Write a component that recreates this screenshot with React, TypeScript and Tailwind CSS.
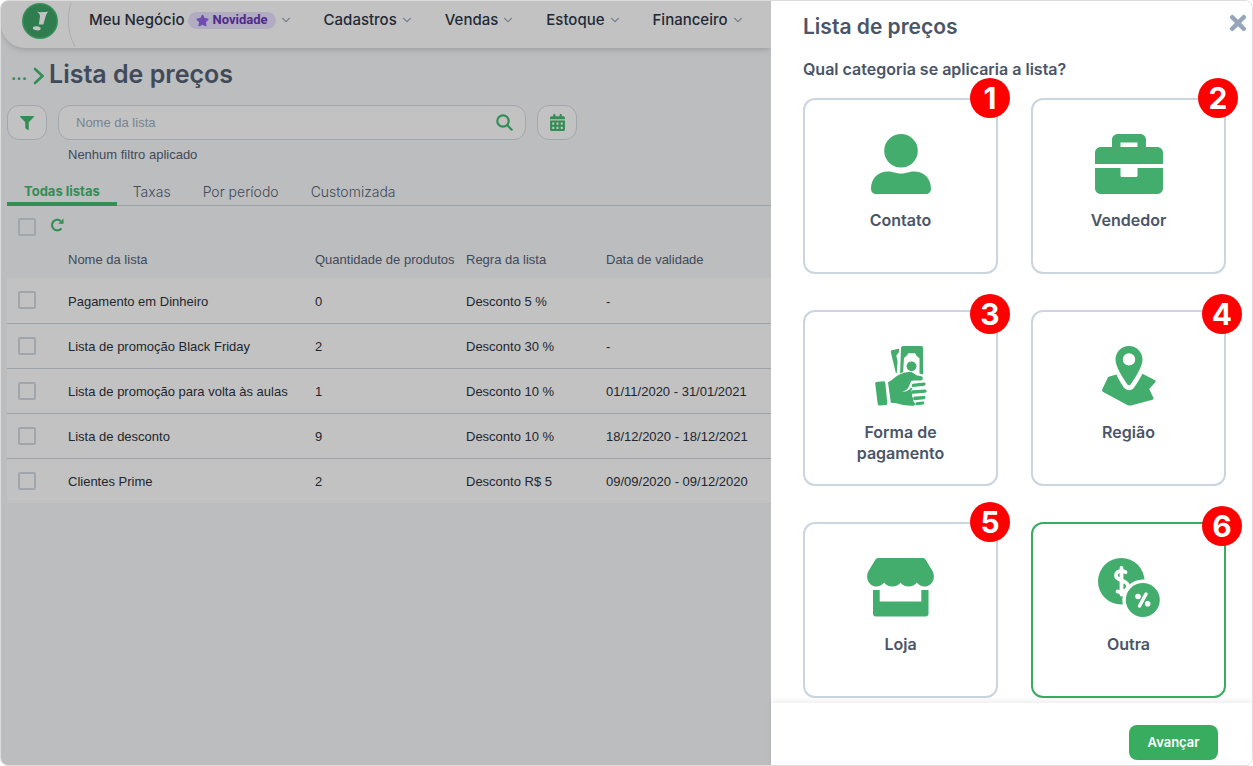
import React, { useState } from 'react';
import { FaFilter, FaCalendarAlt, FaStar, FaTimes } from 'react-icons/fa';
import { ChevronDown } from 'lucide-react';

interface PriceList {
  id: number;
  name: string;
  quantity: number;
  rule: string;
  validity: string;
}

interface Category {
  id: string;
  label: string;
  icon: React.ReactNode;
  badgeClass: string;
}

const priceLists: PriceList[] = [
  { id: 1, name: 'Pagamento em Dinheiro', quantity: 0, rule: 'Desconto 5 %', validity: '-' },
  { id: 2, name: 'Lista de promoção Black Friday', quantity: 2, rule: 'Desconto 30 %', validity: '-' },
  { id: 3, name: 'Lista de promoção para volta às aulas', quantity: 1, rule: 'Desconto 10 %', validity: '01/11/2020 - 31/01/2021' },
  { id: 4, name: 'Lista de desconto', quantity: 9, rule: 'Desconto 10 %', validity: '18/12/2020 - 18/12/2021' },
  { id: 5, name: 'Clientes Prime', quantity: 2, rule: 'Desconto R$ 5', validity: '09/09/2020 - 09/12/2020' },
];

const menuItems = ['Meu Negócio', 'Cadastros', 'Vendas', 'Estoque', 'Financeiro'];
const tabs = ['Todas listas', 'Taxas', 'Por período', 'Customizada'];

const ContactIcon = () => (
  <svg width="60" height="60" viewBox="0 0 60 60" fill="currentColor">
    <circle cx="30" cy="16.8" r="16.8" />
    <path d="M0 54.500C0 44.500 7 37.500 17 37.500c5 0 7.500 2 13 2s8-2 13-2c10 0 17 7 17 17 0 3.500-2 5.500-5.500 5.500h-49C2 60 0 58 0 54.500z" />
  </svg>
);

const BriefcaseIcon = () => (
  <svg width="68" height="60" viewBox="0 0 68 60" fill="currentColor">
    <path fillRule="evenodd" d="M17 13V6c0-3.500 2.500-6 6-6h22c3.500 0 6 2.500 6 6v7h11c3.500 0 6 2.500 6 6v11H0V19c0-3.500 2.500-6 6-6h11zm8.500 0h17V8.500h-17V13z" />
    <path d="M0 34h25.500v7.500c0 1 .7 1.500 1.500 1.500h14c.8 0 1.500-.5 1.500-1.500V34H68v20c0 3.500-2.500 6-6 6H6c-3.500 0-6-2.500-6-6V34z" />
  </svg>
);

const PaymentIcon = () => (
  <svg width="52" height="60" viewBox="0 0 52 60" fill="currentColor">
    <path d="M1.500 36l7-.8c1-.1 1.700.5 1.800 1.500l2 20.500c.1 1-.4 1.600-1.400 1.700l-6.500.6c-1 .1-1.600-.4-1.700-1.400L.2 37.600c-.1-1 .3-1.500 1.300-1.600z" />
    <path d="M17 4.300l6.300-1.500c.6-.1.900.2.800.8l-.2 2.700-2.600 3.200 1.300 6-.8 11.200-.9.600L15.800 6c-.2-.9.200-1.500 1.200-1.700z" />
    <path d="M28 0h18c1.300 0 2 .8 2 2v26.500l-3.500-1V12.200l-3-2.400-1.300-2.600h-7l-1.500 2.600-2.700 2.200-.9 14-3 1.500L26 2c.1-1.300.8-2 2-2z" />
    <circle cx="36.500" cy="20.300" r="4.900" />
    <path d="M13 36.200c4.500-2.200 7.500-5.700 11-7.500 4-2 8-3.200 12.500-2.700l5.500 3.500 4.500.7c2 .8 1.700 3.800-.5 4.200-4 .5-7-.4-10 .8-1.700 4-2.200 6.500-4 8-1.300 1.200-3 1.900-5 2.600 4.200.2 7.500-1.800 9-4.300l1.600 1c-1.700 1.500-1.800 3.500-.2 5-.8 2-.4 3.500 1 4.700-.6 2.300.2 4.300 2.400 5.800l-2 1.700c-6.500.2-13-.8-18.500-2.600-1.700-.5-3.500.2-4.500-.5z" />
    <path d="M38 37.700l11-1.200c2.200 0 2.300 3 0 3.300L38 41c-1.700 0-1.700-3.100 0-3.300zM37.500 44.300l12.500-.8c2.200 0 2.200 3 0 3.300l-12.500 1c-1.700 0-1.700-3.300 0-3.500zM39.500 50.600l9.500-.6c2 0 2 2.700 0 3.200l-9.500 1c-1.700 0-1.700-3.400 0-3.600zM41.500 56.300l6.500-.8c1.800 0 1.700 2.500 0 2.900l-6 .9c-1.700 0-2-2.700-.5-3z" />
  </svg>
);

const RegionIcon = () => (
  <svg width="54" height="60" viewBox="0 0 54 60" fill="currentColor">
    <path fillRule="evenodd" d="M27 0c7.500 0 13.500 6 13.500 13.500 0 7-6.500 17-11.500 24.500-1.300 1.700-2.700 1.700-4 0C20 30.500 13.500 20.500 13.500 13.500 13.500 6 19.500 0 27 0zm0 7.200a6.200 6.200 0 1 0 0 12.400 6.200 6.200 0 0 0 0-12.400z" />
    <path d="M7.500 30.500l7-2c.8 2.500 4 8 7.500 13.300 2.800 3.300 7.500 3.300 10 0 3.800-5.500 6.700-10.800 8.500-14L52.500 34c1.200.6 1.500 1.500.6 2.500L47.200 43l4.300 9c.3 1-.2 1.500-1 1.800L29 59.400c-1.500.4-2.600.2-3.700-.4L1.200 46C.2 45.500-.2 44.500.2 43.500l5.300-11.300c.4-.9 1-1.500 2-1.700z" />
  </svg>
);

const StoreIcon = () => (
  <svg width="67" height="60" viewBox="0 0 67 60" fill="currentColor">
    <path d="M11.500 0h44c1.400 0 2.400.5 3.200 1.800L65.500 13C69 19 65.500 28.500 58 28.500c-4 0-6.500-2-8.300-4-3 5.300-13 5.300-16.200 0-3.200 5.300-13.200 5.300-16.200 0-1.800 2-4.300 4-8.300 4C1.500 28.500-2 19 1.500 13L8.300 1.800C9.100.5 10.100 0 11.500 0z" />
    <path d="M6 32h6.700v11.500h41.600V32H61.500v23.500c0 2-1 3-3 3H9c-2 0-3-1-3-3V32z" />
  </svg>
);

const OtherIcon = () => (
  <svg width="62" height="60" viewBox="0 0 62 60" fill="currentColor">
    <circle cx="23.300" cy="23.300" r="23.300" />
    <path d="M27.500 14.200c-3.500-2.200-9.500-1.500-9.500 3.300 0 6 12 4 12 10.500 0 5.500-6.500 7-10.500 5.500M23.500 10v26.500" fill="none" stroke="#fff" strokeWidth="3.800" strokeLinecap="round" />
    <circle cx="44.800" cy="42" r="20.500" fill="#fff" />
    <circle cx="44.800" cy="42" r="17" />
    <path d="M48 36l-6.500 12" stroke="#fff" strokeWidth="3.500" strokeLinecap="round" />
    <circle cx="40" cy="38.500" r="2.800" fill="#fff" />
    <circle cx="49.700" cy="45.700" r="2.800" fill="#fff" />
  </svg>
);

const categories: Category[] = [
  { id: 'contato', label: 'Contato', icon: <ContactIcon />, badgeClass: '-top-5 -right-3' },
  { id: 'vendedor', label: 'Vendedor', icon: <BriefcaseIcon />, badgeClass: '-top-5 -right-3' },
  { id: 'pagamento', label: 'Forma de pagamento', icon: <PaymentIcon />, badgeClass: '-top-4 -right-3' },
  { id: 'regiao', label: 'Região', icon: <RegionIcon />, badgeClass: '-top-4 -right-4' },
  { id: 'loja', label: 'Loja', icon: <StoreIcon />, badgeClass: '-top-5 -right-3' },
  { id: 'outra', label: 'Outra', icon: <OtherIcon />, badgeClass: '-top-4 -right-4' },
];

const Logo = () => (
  <svg width="36" height="36" viewBox="0 0 36 36" className="shrink-0">
    <circle cx="18" cy="18" r="18" fill="#4cbd76" />
    <circle cx="18" cy="18" r="16.500" fill="#3fa468" />
    <path d="M15 8.500l3 .8 8.300-.6c-1.600 1.200-2.200 3-2.800 5.300L21.300 21.500h-4.500l1.200-8c.1-1.900-.9-3.200-3-5z" fill="#fff" />
    <ellipse cx="14.800" cy="25.300" rx="4" ry="2" fill="#fff" transform="rotate(8 14.800 25.300)" />
  </svg>
);

const Checkbox: React.FC<{ label: string }> = ({ label }) => (
  <input
    type="checkbox"
    aria-label={label}
    className="block size-[18px] appearance-none rounded-xs border-2 border-[#d3dae5] checked:bg-[#44ba70]"
  />
);

const Header = () => (
  <header className="flex h-[47px] shrink-0 items-start rounded-bl-[24px] bg-white pl-[21px] shadow-md">
    <div className="flex w-[67px] items-start pt-[2px]">
      <Logo />
      <svg width="12" height="45" viewBox="0 0 12 45" fill="none" className="ml-2 shrink-0">
        <path d="M5 0C1 14 1 28 9 44" stroke="#dfe3ea" strokeWidth="1" />
      </svg>
    </div>
    <nav className="flex gap-[31px] pt-[7px] whitespace-nowrap">
      {menuItems.map((item, index) => (
        <button key={item} className="flex items-center gap-[3px] text-[15px] leading-6 font-medium text-[#2d3748]">
          {item}
          {index === 0 && (
            <span className="flex h-[17px] items-center gap-1 rounded-full bg-[#e9e2ff] px-2 font-['Roboto',sans-serif] text-[13px] font-bold text-[#6b36b8]">
              <FaStar size={13} className="text-[#9466ea]" /> Novidade
            </span>
          )}
          <ChevronDown size={14} strokeWidth={2} className="text-[#a0aec0]" />
        </button>
      ))}
    </nav>
  </header>
);

const PriceListPage = () => {
  const [activeTab, setActiveTab] = useState('Todas listas');

  return (
    <main className="relative flex min-w-0 flex-1 flex-col overflow-hidden bg-[#f7f9fb]">
      <Header />

      <div className="flex flex-col pl-1.5">
        <div className="mt-2 flex items-center gap-1 pl-1 text-[#44ba70]">
          <a href="#inicio" className="w-[18px] text-base leading-9 font-bold">...</a>
          <svg width="12" height="18" viewBox="0 0 12 18" fill="none" className="mt-1">
            <path d="M2 2l7.500 7L2 16" stroke="currentColor" strokeWidth="2.600" strokeLinecap="round" />
          </svg>
          <h1 className="text-[25px] leading-9 font-semibold whitespace-nowrap text-[#566276]">Lista de preços</h1>
        </div>

        <div className="mt-[13px] flex gap-[11px]">
          <button aria-label="Filtrar" className="flex h-[35px] w-10 items-center justify-center rounded-xl border border-[#d3dae5] bg-white text-[#44ba70]">
            <FaFilter size={14} />
          </button>
          <div className="flex h-[35px] w-[468px] items-center rounded-xl border border-[#d3dae5] bg-white pr-3 pl-[17px]">
            <input
              type="text"
              aria-label="Nome da lista"
              placeholder="Nome da lista"
              className="min-w-0 flex-1 bg-transparent font-['Liberation_Sans',Arial,sans-serif] text-[13px] outline-none placeholder:text-[#a0aec0]"
            />
            <button aria-label="Buscar" className="text-[#44ba70]">
              <svg width="17" height="17" viewBox="0 0 17 17" fill="none" stroke="currentColor" strokeWidth="2.200" strokeLinecap="round">
                <circle cx="7" cy="7" r="5.700" />
                <path d="M11.300 11.300L15.700 15.700" />
              </svg>
            </button>
          </div>
          <button aria-label="Calendário" className="flex h-[35px] w-10 items-center justify-center rounded-xl border border-[#d3dae5] bg-white text-[#44ba70]">
            <FaCalendarAlt size={17} />
          </button>
        </div>
        <p className="mt-1.5 pl-[61px] font-['Liberation_Sans',Arial,sans-serif] text-[13px] leading-[18px] text-[#566276]">Nenhum filtro aplicado</p>

        <div role="tablist" className="mt-[11px] flex h-[31px] border-b border-[#cbd5e0] text-sm">
          {tabs.map((tab) => (
            <button
              key={tab}
              role="tab"
              aria-selected={tab === activeTab}
              onClick={() => setActiveTab(tab)}
              className={
                tab === activeTab
                  ? 'h-[31px] border-b-4 border-[#44ba70] px-[17px] pt-1.5 text-[13px] font-bold text-[#44ba70]'
                  : 'h-[31px] px-4 pt-0.5 font-light text-[#566276]'
              }
            >
              {tab}
            </button>
          ))}
        </div>

        <div className="mt-3 flex items-start gap-[14px] pl-[11px]">
          <Checkbox label="Selecionar todas" />
          <button aria-label="Atualizar" className="text-[#44ba70]">
            <svg width="14" height="14" viewBox="0 0 14 14" fill="none">
              <path d="M11.500 10.300A5.300 5.300 0 1 1 10.700 3" stroke="currentColor" strokeWidth="2.100" />
              <path d="M13.500.5v5.300H8.200z" fill="currentColor" />
            </svg>
          </button>
        </div>

        <table className="mt-3 w-full table-fixed text-left font-['Liberation_Sans',Arial,sans-serif] text-[13px] text-[#2d3340]">
          <thead>
            <tr className="h-[30px] text-[#566276]">
              <th className="w-[61px]"></th>
              <th className="w-[247px] pb-1.5 font-normal">Nome da lista</th>
              <th className="w-[151px] pb-1.5 font-normal whitespace-nowrap">Quantidade de produtos</th>
              <th className="w-[140px] pb-1.5 font-normal">Regra da lista</th>
              <th className="pb-1.5 font-normal">Data de validade</th>
            </tr>
          </thead>
          <tbody>
            {priceLists.map((list) => (
              <tr key={list.id} className="h-[45px] border-b border-[#cbd5e0] bg-white last:border-b-0">
                <td className="pl-[11px]"><Checkbox label={list.name} /></td>
                <td className="pt-0.5">{list.name}</td>
                <td className="pt-0.5">{list.quantity}</td>
                <td className="pt-0.5">{list.rule}</td>
                <td className="pt-0.5 whitespace-nowrap">{list.validity}</td>
              </tr>
            ))}
          </tbody>
        </table>
      </div>

      {/* Sombra sobre a página enquanto o painel está aberto */}
      <div className="pointer-events-none absolute inset-0 bg-black/24" />
    </main>
  );
};

const CategoryPanel = () => {
  const [selected, setSelected] = useState('outra');

  return (
    <aside className="flex w-[481px] shrink-0 flex-col bg-white">
      <div className="min-h-0 flex-1 overflow-hidden pr-[26px] pl-8">
        <div className="flex items-start justify-between pt-2.5">
          <h2 className="text-[21px] leading-8 font-semibold text-[#4a5568]">Lista de preços</h2>
          <button aria-label="Fechar" className="-mr-6 text-[#97a5ba]">
            <FaTimes size={24} />
          </button>
        </div>
        <p className="mt-3.5 text-base leading-6 font-semibold text-[#4a5568]">Qual categoria se aplicaria a lista?</p>

        <div className="mt-[17px] grid grid-cols-2 gap-x-[33px] gap-y-9">
          {categories.map((category, index) => (
            <div key={category.id} className="relative">
              <button
                aria-pressed={selected === category.id}
                onClick={() => setSelected(category.id)}
                className={`flex h-44 w-full flex-col items-center rounded-xl border-2 px-9 pt-[34px] ${
                  selected === category.id ? 'border-[#38ad60]' : 'border-[#cbd5e0]'
                }`}
              >
                <span className="text-[#42ad6c]">{category.icon}</span>
                <span className="mt-4 text-base leading-[21px] font-semibold text-[#4a5568]">{category.label}</span>
              </button>
              <span className={`absolute flex size-10 items-center justify-center rounded-full bg-[#ff0000] text-3xl font-bold text-white ${category.badgeClass}`}>
                {index + 1}
              </span>
            </div>
          ))}
        </div>
      </div>

      <footer className="relative flex h-[62px] shrink-0 justify-end bg-white pt-[22px] pr-[34px] shadow-[0_-2px_6px_rgba(0,0,0,0.08)]">
        <button className="h-[35px] w-[89px] rounded-lg bg-[#38ad60] text-[13px] font-semibold text-white">Avançar</button>
      </footer>
    </aside>
  );
};

export default function App() {
  return (
    <div className="flex h-screen w-full overflow-hidden rounded-lg border border-[#dcdcdc] bg-white font-['Inter',sans-serif]">
      <PriceListPage />
      <CategoryPanel />
    </div>
  );
}
